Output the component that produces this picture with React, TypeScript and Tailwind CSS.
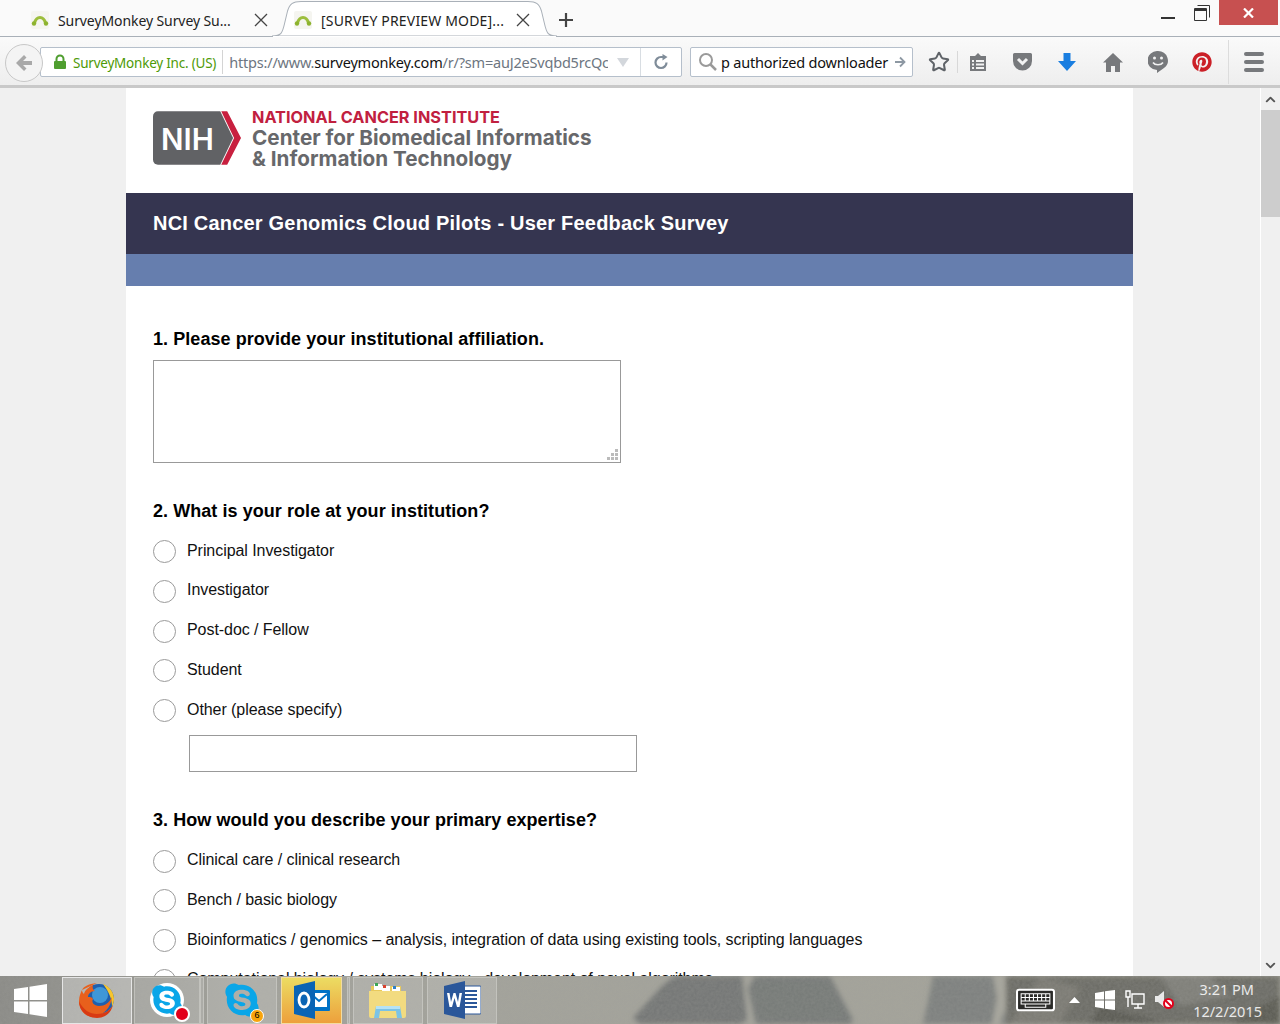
import { FaPinterest, FaSkype } from "react-icons/fa";
import { ChevronDown, ChevronUp, Star } from "lucide-react";

function Favicon() {
  return (
    <svg width="18" height="18" viewBox="0 0 18 18">
      <rect width="18" height="18" fill="#f5f5f0" rx="2" />
      <path d="M3.500 12C4.500 8.500 6.500 6.500 9 6.500s4.500 2 5.500 5.500" fill="none" stroke="#9cbe3c" strokeWidth="3" />
      <circle cx="3" cy="12.500" r="2.200" fill="#8db32e" />
      <circle cx="15" cy="12.500" r="2.200" fill="#8db32e" />
    </svg>
  );
}

function CloseX({ className }: { className: string }) {
  return (
    <svg width="14" height="14" viewBox="0 0 14 14" className={className}>
      <path d="M1 1l12 12M13 1L1 13" stroke="currentColor" strokeWidth="1.300" />
    </svg>
  );
}

function Radio({ label }: { label: string }) {
  return (
    <div className="flex h-[23px] items-center gap-[11px]">
      <span className="h-[23px] w-[23px] shrink-0 rounded-full border border-[#9a9a9a] bg-white" />
      <span className="relative top-[-1px] text-[16px] tracking-[-0.06px] text-[#111]">{label}</span>
    </div>
  );
}

function Question({ children }: { children: string }) {
  return <h2 className="text-[18px] leading-[21px] font-bold tracking-[0.06px] text-black">{children}</h2>;
}

function TaskButton({ children, className }: { children?: React.ReactNode; className: string }) {
  return <div className={`flex h-[47px] items-center justify-center border border-[#d0d0cc]/60 bg-white/15 ${className}`}>{children}</div>;
}

function Tabs() {
  return (
    <div className="relative flex h-[37px] items-center border-b border-[#a9b0b8] bg-[#fafafa] pt-[4px] text-[14px] text-[#222] [font-family:'Noto_Sans',sans-serif]">
      <svg className="absolute top-0 left-[272px]" width="285" height="37" viewBox="0 0 275 37" preserveAspectRatio="none">
        <path d="M0 36c9 0 10-3 12-12l3-13C17 4 20 1.500 28 1.500h219c8 0 11 2.500 13 9.500l3 13c2 9 3 12 12 12z" fill="#fff" stroke="#a9b0b8" />
        <rect x="1" y="36" width="273" height="1" fill="#fff" />
      </svg>
      <div className="relative ml-[31px] flex items-center">
        <Favicon />
        <span className="ml-[9px] w-[196px] truncate tracking-[-0.09px]">SurveyMonkey Survey Su...</span>
        <CloseX className="text-[#444]" />
      </div>
      <div className="relative ml-[26px] flex items-center">
        <Favicon />
        <span className="ml-[9px] w-[195px] truncate tracking-[0.17px]">[SURVEY PREVIEW MODE]...</span>
        <CloseX className="text-[#444]" />
      </div>
      <svg className="relative ml-[28px]" width="16" height="16" viewBox="0 0 16 16">
        <path d="M8 1v14M1 8h14" stroke="#444" strokeWidth="2.200" />
      </svg>
      <div className="absolute top-0 right-0 flex items-start">
        <span className="mt-[17px] mr-[19px] h-[2px] w-[14px] bg-[#333]" />
        <svg className="mt-[5px] mr-[9px]" width="16" height="16" viewBox="0 0 16 16">
          <path d="M3.500.5h12v12M.5 3.500h12v12H.5z" fill="none" stroke="#333" />
          <rect x="1" y="3" width="11" height="3" fill="#333" />
        </svg>
        <div className="mr-[2px] flex h-[25px] w-[59px] items-center justify-center bg-[#c75050]">
          <svg width="11" height="10" viewBox="0 0 11 10">
            <path d="M1 .5l9 9M10 .5l-9 9" stroke="#fff" strokeWidth="2.200" />
          </svg>
        </div>
      </div>
    </div>
  );
}

function NavBar() {
  return (
    <div className="relative flex h-[51px] items-center border-b-[3px] border-[#c9c9c9] bg-gradient-to-b from-[#fafafa] to-[#eeeeee] pt-[2px] text-[14px] [font-family:'Noto_Sans',sans-serif]">
      <div className="ml-[40px] flex h-[30px] w-[642px] items-center rounded-[2px] border border-[#b5bfcb] bg-white pl-[12px]">
        <svg width="14" height="16" viewBox="0 0 14 16">
          <path d="M3.500 7V5a3.500 3.500 0 017 0v2" fill="none" stroke="#4f9e2f" strokeWidth="2" />
          <rect x="1" y="7" width="12" height="8" rx="1" fill="#4f9e2f" />
        </svg>
        <span className="ml-[6px] pt-[2px] text-[13.500px] tracking-[-0.22px] text-[#4e9a06]">SurveyMonkey Inc. (US)</span>
        <span className="ml-[6px] h-[24px] w-px bg-[#d4d4d4]" />
        <span className="ml-[6px] w-[379px] overflow-hidden pt-[2px] text-[14.500px] tracking-[-0.2px] whitespace-nowrap text-[#6d7681]">
          https://www.<span className="text-[#111]">surveymonkey.com</span>/r/?sm=auJ2eSvqbd5rcQc
        </span>
        <svg className="ml-[9px]" width="12" height="9" viewBox="0 0 12 9">
          <path d="M0 0h12L6 9z" fill="#d3d7dc" />
        </svg>
        <span className="ml-[11px] h-[28px] w-px bg-[#d8dde2]" />
        <svg className="ml-[12px]" width="16" height="16" viewBox="0 0 16 16">
          <path d="M13.500 8.500A5.500 5.500 0 118 3h3" fill="none" stroke="#7f8c99" strokeWidth="2.200" />
          <path d="M9.500 0l5 3-5 3.500z" fill="#7f8c99" />
        </svg>
      </div>
      <div className="ml-[8px] flex h-[30px] w-[223px] items-center rounded-[2px] border border-[#b5bfcb] bg-white pl-[7px]">
        <svg width="20" height="20" viewBox="0 0 20 20">
          <circle cx="8" cy="8" r="6" fill="none" stroke="#9a9a9a" strokeWidth="2" />
          <path d="M12.500 12.500L18 18" stroke="#9a9a9a" strokeWidth="2.500" />
        </svg>
        <span className="ml-[3px] w-[168px] pt-[2px] text-[14.500px] tracking-[-0.2px] whitespace-nowrap text-[#111]">p authorized downloader</span>
        <svg className="ml-[5px]" width="12" height="12" viewBox="0 0 12 12">
          <path d="M1 6h9M6 1.500L10.500 6 6 10.500" fill="none" stroke="#8d98a3" strokeWidth="1.800" />
        </svg>
      </div>
      <Star className="ml-[15px] text-[#5f6368]" size={22} strokeWidth={2.200} />
      <span className="ml-[7px] h-[22px] w-px bg-[#d8d8d8]" />
      <svg className="ml-[11px]" width="18" height="20" viewBox="0 0 18 20">
        <path d="M1 4h5l3-3 3 3h5v15H1z" fill="#77797c" />
        <path d="M3 8h2v2H3zM7 8h8v2H7zM3 11.500h2v2H3zM7 11.500h8v2H7zM3 15h2v2H3zM7 15h8v2H7z" fill="#f2f2f2" />
      </svg>
      <svg className="ml-[25px]" width="21" height="20" viewBox="0 0 21 20">
        <path d="M2.500 1h16A1.500 1.500 0 0120 2.500V9a9.500 9.500 0 01-19 0V2.500A1.500 1.500 0 012.500 1z" fill="#77797c" />
        <path d="M6 7l4.500 4.500L15 7" fill="none" stroke="#f2f2f2" strokeWidth="3" />
      </svg>
      <svg className="ml-[25px]" width="18" height="20" viewBox="0 0 18 20">
        <path d="M5.500 1h7v8H18l-9 10L0 9h5.500z" fill="#1a7ee0" />
      </svg>
      <svg className="ml-[27px]" width="20" height="19" viewBox="0 0 20 19">
        <path d="M10 0L0 9.500h3V19h5v-6h4v6h5V9.500h3z" fill="#77797c" />
      </svg>
      <svg className="ml-[25px]" width="20" height="22" viewBox="0 0 20 22">
        <path d="M10 0a10 9.500 0 016 17l-7 5v-3a10 9.500 0 011-19z" fill="#77797c" />
        <circle cx="6.500" cy="7" r="1.500" fill="#f2f2f2" />
        <circle cx="13.500" cy="7" r="1.500" fill="#f2f2f2" />
        <path d="M5 11.500c2 3 8 3 10 0" fill="none" stroke="#f2f2f2" strokeWidth="1.600" />
      </svg>
      <FaPinterest className="ml-[24px] text-[#cb2027]" size={20} />
      <span className="ml-[16px] h-[44px] w-px bg-[#dcdcdc]" />
      <div className="ml-[15px] flex flex-col gap-[4px]">
        <span className="h-[4px] w-[20px] rounded-[2px] bg-[#77797c]" />
        <span className="h-[4px] w-[20px] rounded-[2px] bg-[#77797c]" />
        <span className="h-[4px] w-[20px] rounded-[2px] bg-[#77797c]" />
      </div>
      <div className="absolute top-[7px] left-[5px] flex h-[38px] w-[38px] items-center justify-center rounded-full border border-[#c8c8c8] bg-[#f4f4f4]">
        <svg width="18" height="18" viewBox="0 0 18 18">
          <path d="M9 1L1 9l8 8 2.500-2.500L8 11h9V7H8l3.500-3.500z" fill="#a9a9a9" />
        </svg>
      </div>
    </div>
  );
}

function Survey() {
  return (
    <main className="ml-[126px] h-full w-[1007px] overflow-hidden bg-white [font-family:'Liberation_Sans',Arial,sans-serif]">
      <div className="flex h-[105px] items-start pt-[22px] pl-[27px]">
        <svg width="89" height="56" viewBox="0 0 90 56">
          <path d="M5 1h63l13 27-13 27H5a5 5 0 01-5-5V6a5 5 0 015-5z" fill="#616265" />
          <path d="M69 1h6l14 27-14 27h-6l13-27z" fill="#c8203f" />
          <text x="8" y="40" fill="#fff" fontSize="30" fontWeight="600" fontFamily="Inter">NIH</text>
        </svg>
        <div className="-mt-[3px] ml-[10px] [font-family:'Inter',sans-serif] font-bold whitespace-nowrap text-[#67686b]">
          <div className="pt-[1px] text-[16.300px] leading-[19px] text-[#c1203f]">NATIONAL CANCER INSTITUTE</div>
          <div className="text-[20.700px] leading-[21px]">Center for Biomedical Informatics</div>
          <div className="text-[20.700px] leading-[21px]">&amp; Information Technology</div>
        </div>
      </div>
      <div className="flex h-[61px] items-center bg-[#353550] pb-[2px] pl-[27px] text-[20px] font-bold tracking-[0.2px] text-white">
        NCI Cancer Genomics Cloud Pilots - User Feedback Survey
      </div>
      <div className="h-[32px] bg-[#667eae]" />
      <div className="px-[27px] pt-[43px]">
        <Question>1. Please provide your institutional affiliation.</Question>
        <div className="relative mt-[10px] h-[103px] w-[468px] border border-[#999] bg-white">
          <svg className="absolute right-[2px] bottom-[2px]" width="11" height="11" viewBox="0 0 11 11">
            <path d="M8 0h3v3H8zM4 4h3v3H4zM8 4h3v3H8zM0 8h3v3H0zM4 8h3v3H4zM8 8h3v3H8z" fill="#bbb" />
          </svg>
        </div>
        <div className="mt-[38px]">
          <Question>2. What is your role at your institution?</Question>
        </div>
        <div className="mt-[18px] flex flex-col gap-[16.750px]">
          <Radio label="Principal Investigator" />
          <Radio label="Investigator" />
          <Radio label="Post-doc / Fellow" />
          <Radio label="Student" />
          <Radio label="Other (please specify)" />
        </div>
        <div className="mt-[13px] ml-[36px] h-[37px] w-[448px] border border-[#999] bg-white" />
        <div className="mt-[38px]">
          <Question>3. How would you describe your primary expertise?</Question>
        </div>
        <div className="mt-[18.500px] flex flex-col gap-[16.750px]">
          <Radio label="Clinical care / clinical research" />
          <Radio label="Bench / basic biology" />
          <Radio label="Bioinformatics / genomics – analysis, integration of data using existing tools, scripting languages" />
          <Radio label="Computational biology / systems biology - development of novel algorithms" />
        </div>
      </div>
    </main>
  );
}

function Scrollbar() {
  return (
    <div className="ml-auto flex h-full w-[20px] flex-col border-l border-white bg-[#f0f0f0]">
      <div className="flex h-[22px] items-center justify-center">
        <ChevronUp size={15} strokeWidth={3} className="text-[#555]" />
      </div>
      <div className="h-[107px] bg-[#cdcdcd]" />
      <div className="flex-1" />
      <div className="flex h-[22px] items-center justify-center">
        <ChevronDown size={15} strokeWidth={3} className="text-[#555]" />
      </div>
    </div>
  );
}

// the desktop photo behind the taskbar, blurred shapes plus a bit of grain
function Wallpaper() {
  return (
    <svg className="absolute inset-0" width="1280" height="48" viewBox="0 0 1280 48">
      <defs>
        <filter id="grain" x="0" y="0" width="100%" height="100%">
          <feTurbulence type="fractalNoise" baseFrequency="0.35" numOctaves="3" seed="4" />
          <feColorMatrix values="0 0 0 0 0.35  0 0 0 0 0.35  0 0 0 0 0.33  0.5 0.5 0 0 -0.3" />
        </filter>
        <filter id="soft" x="-10%" y="-50%" width="120%" height="200%"><feGaussianBlur stdDeviation="2.500" /></filter>
        <linearGradient id="ground" x1="0" x2="1" y1="0" y2="0">
          <stop offset="0" stopColor="#8c8c88" />
          <stop offset="0.2" stopColor="#a3a39c" />
          <stop offset="1" stopColor="#a5a49a" />
        </linearGradient>
      </defs>
      <rect width="1280" height="48" fill="url(#ground)" />
      <g filter="url(#soft)">
        <path d="M633 42L662 10L675 0H742L747 44L740 48H640z" fill="#767877" />
        <path d="M748 12L755 0H830L853 44L850 48H756z" fill="#787b79" />
        <path d="M923 48L927 30L933 0H1000L1006 48z" fill="#7f8280" />
        <path d="M993 0H1003L1005 30L1000 48H992L997 22z" fill="#a9a89f" />
        <path d="M1006 0H1280V48H1006z" fill="#6e6e68" />
        <path d="M1040 0L1080 12L1060 48H1010z" fill="#7d7c74" />
        <path d="M1160 0H1210L1230 20L1180 30z" fill="#80807a" />
        <path d="M1100 30L1170 48H1090z" fill="#5d5d57" />
        <path d="M1230 48L1280 20V48z" fill="#5d5d55" />
      </g>
      <rect width="1280" height="48" filter="url(#grain)" opacity="0.5" />
    </svg>
  );
}

function Taskbar() {
  return (
    <div className="relative flex h-[48px] items-center">
      <Wallpaper />
      <svg className="relative ml-[14px]" width="33" height="33" viewBox="0 0 33 33">
        <path d="M0 5l14-2v13H0zM15.500 2.800L33 0v16H15.500zM0 17.500h14v12.500l-14-2zM15.500 17.500H33V33l-17.500-2.800z" fill="#fff" />
      </svg>
      <TaskButton className="relative ml-[15px] w-[70px] border-[#e6e6e6] bg-white/30">
        <svg width="38" height="38" viewBox="0 0 38 38">
          <circle cx="21" cy="18" r="15" fill="#1f5fae" />
          <circle cx="22" cy="14" r="8" fill="#3f97d8" />
          <path d="M25 3c6 2 11 8 11 15 0 3-1 5-2 8 0-8-3-15-9-23z" fill="#f7c52c" />
          <path d="M19 2C10 3 5 6 4 9c0 2 1 3 2 4 1-5 6-7 9-9-1 3 0 5 2 6-4 0-7 3-7 6 2 0 4 0 5 2-2 3 1 7 6 7 6 0 10-3 13-9-1 10-8 19-19 19C9 37 1 30 1 20c0-5 2-9 3-11" fill="#e8601c" />
          <path d="M19 37C9 37 1 30 1 20c4 9 11 13 18 13 8 0 13-4 16-9-2 8-8 13-16 13z" fill="#d83a12" />
        </svg>
      </TaskButton>
      <TaskButton className="relative ml-[2px] w-[66px]">
        <span className="relative">
          <span className="block rounded-full bg-white"><FaSkype size={34} className="text-[#0aa6e8]" /></span>
          <span className="absolute right-[-6px] bottom-[-5px] h-[16px] w-[16px] rounded-full border-2 border-white bg-[#e2001a]" />
        </span>
      </TaskButton>
      <TaskButton className="relative w-[4px]" />
      <TaskButton className="relative ml-[3px] w-[70px]">
        <span className="relative">
          <FaSkype size={38} className="text-[#0aa6e8]" />
          <span className="absolute right-[-3px] bottom-[-4px] flex h-[14px] w-[14px] items-center justify-center rounded-full border border-white bg-[#f8a40c] text-[9px] text-black [font-family:'Liberation_Sans',sans-serif]">6</span>
        </span>
      </TaskButton>
      <TaskButton className="relative ml-[4px] w-[61px] border-[#f3dca0] bg-[linear-gradient(180deg,#ecdc62,#eda03c)]">
        <svg width="36" height="38" viewBox="0 0 36 38">
          <path d="M14 9h21a1 1 0 011 1v19a1 1 0 01-1 1H14z" fill="#0072c6" />
          <path d="M17 12h16v14H17z" fill="#fff" />
          <path d="M17 13l8 7 8-7" fill="none" stroke="#0072c6" strokeWidth="2" />
          <path d="M0 5L21 0v38L0 33z" fill="#0a64b4" />
          <ellipse cx="10" cy="19" rx="5" ry="7" fill="none" stroke="#fff" strokeWidth="2.800" />
        </svg>
      </TaskButton>
      <TaskButton className="relative ml-[5px] w-[3px]" />
      <TaskButton className="relative ml-[3px] w-[70px]">
        <svg width="40" height="38" viewBox="0 0 40 38">
          <path d="M3 5h30v12H3z" fill="#e8c95c" />
          <path d="M6 3h8v6H6z" fill="#fff" />
          <path d="M7 2h3v3H7z" fill="#3aa655" />
          <path d="M14 5h8v5h-8z" fill="#fff" />
          <path d="M15 4h3v3h-3z" fill="#d9432f" />
          <path d="M24 6h8v5h-8z" fill="#fff" />
          <path d="M25 5h3v3h-3z" fill="#2f80c9" />
          <path d="M1 10h37v25a2 2 0 01-2 2H3a2 2 0 01-2-2z" fill="#f2db80" />
          <path d="M6 37l2-12h24l2 12h-5l-1-7H12l-1 7z" fill="#7cc3e6" />
          <path d="M8 25h24v3H8z" fill="#b5e2f5" />
        </svg>
      </TaskButton>
      <TaskButton className="relative ml-[4px] w-[70px]">
        <svg width="37" height="38" viewBox="0 0 37 38">
          <rect x="14" y="5" width="23" height="28" rx="1" fill="#fff" stroke="#2b579a" />
          <path d="M19 10h14M19 14h14M19 18h14M19 22h14M19 26h14" stroke="#2b579a" strokeWidth="2" />
          <path d="M0 5L21 0v38L0 33z" fill="#2b579a" />
          <path d="M3 12l2.500 14h2.500l2.500-9 2.500 9h2.500L18 12h-2.500l-1.500 9-2.500-9H9.500l-2.500 9-1.500-9z" fill="#fff" />
        </svg>
      </TaskButton>
      <div className="relative ml-auto flex items-center">
        <svg width="39" height="24" viewBox="0 0 38 22">
          <rect x="1" y="1" width="36" height="20" rx="2" fill="#2a2a28" stroke="#fff" strokeWidth="2" />
          <path d="M5 5h28v10H5zM5 8.500h28M5 12h28M9 5v7M13 5v7M17 5v7M21 5v7M25 5v7M29 5v7M9 15h20v3H9z" fill="none" stroke="#fff" />
        </svg>
        <svg className="ml-[14px]" width="11" height="6" viewBox="0 0 11 6">
          <path d="M0 6l5.500-6L11 6z" fill="#fff" />
        </svg>
        <svg className="ml-[15px]" width="20" height="20" viewBox="0 0 20 20">
          <path d="M0 3l9-1.500V9.500H0zM10 1.300L20 0v9.500H10zM0 10.500h9v8L0 17zM10 10.500h10V20l-10-1.300z" fill="#fff" />
        </svg>
        <svg className="ml-[10px]" width="20" height="20" viewBox="0 0 20 20">
          <path d="M1 1h4v6H1zM3 7v10M7 4h12v10H7zM13 14v4M9 18h8" fill="none" stroke="#fff" strokeWidth="1.400" />
        </svg>
        <svg className="ml-[10px]" width="20" height="20" viewBox="0 0 20 20">
          <path d="M0 6h3l6-5v16l-6-5H0z" fill="#e8e8e8" />
          <circle cx="13.500" cy="13.500" r="4.500" fill="#fff" stroke="#e2001a" strokeWidth="2" />
          <path d="M10.500 10.500l6 6" stroke="#e2001a" strokeWidth="2" />
        </svg>
        <div className="mr-[18px] ml-[18px] text-right text-[14.500px] leading-[22px] text-white/85 [font-family:'Noto_Sans',sans-serif]">
          <div className="pr-[8px]">3:21 PM</div>
          <div>12/2/2015</div>
        </div>
      </div>
    </div>
  );
}

export default function App() {
  return (
    <div className="flex h-[1024px] w-[1280px] flex-col overflow-hidden">
      <Tabs />
      <NavBar />
      <div className="flex h-[888px] bg-[#f0f0f0]">
        <Survey />
        <Scrollbar />
      </div>
      <Taskbar />
    </div>
  );
}
